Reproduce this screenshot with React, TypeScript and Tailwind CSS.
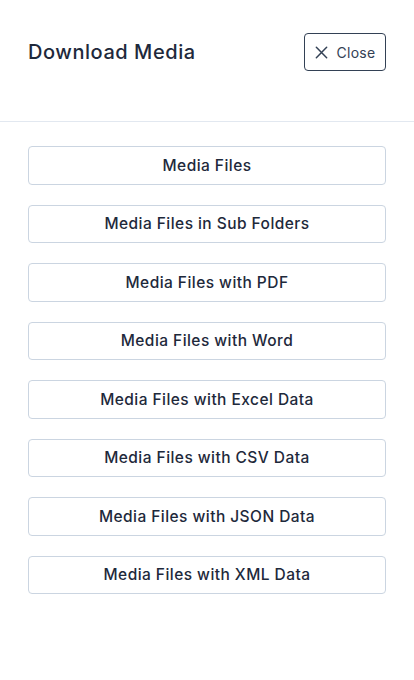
import React from "react";

const items = [
  "Media Files",
  "Media Files in Sub Folders",
  "Media Files with PDF",
  "Media Files with Word",
  "Media Files with Excel Data",
  "Media Files with CSV Data",
  "Media Files with JSON Data",
  "Media Files with XML Data",
];

export default function App() {
  return (
    <div className="w-[414px] h-[680px] bg-white text-[#1e293b]" style={{ fontFamily: "Inter, 'Open Sans', sans-serif" }}>
      <div className="h-[122px] flex items-start justify-between px-[28px] pt-[33px] border-b border-[#e2e8f0]">
        <h2 className="text-[20px] font-medium leading-[38px] tracking-[0.55px] text-[#1e293b]">Download Media</h2>
        <button className="h-[38px] w-[82px] flex items-center justify-center gap-[7px] rounded-[4px] border border-[#334155] text-[14px] tracking-[0.3px] text-[#334155]">
          <svg width="15" height="15" viewBox="0 0 16 16" fill="none" stroke="#334155" strokeWidth="1.6" strokeLinecap="round">
            <path d="M2.5 2.5 L13.5 13.5 M13.5 2.5 L2.5 13.5" />
          </svg>
          Close
        </button>
      </div>
      <div className="flex flex-col gap-[20px] px-[28px] pt-[24px]">
        {items.map((t) => (
          <button
            key={t}
            className="h-[38.5px] w-full rounded-[4px] border border-[#cbd5e1] bg-white text-[15.5px] tracking-[0.45px] font-medium text-[#1e293b] flex items-center justify-center"
          >
            {t}
          </button>
        ))}
      </div>
    </div>
  );
}
